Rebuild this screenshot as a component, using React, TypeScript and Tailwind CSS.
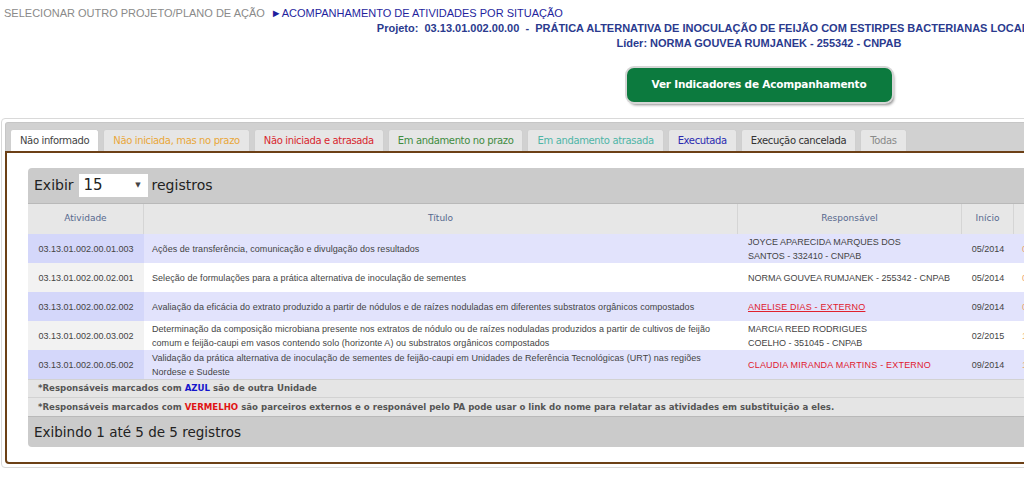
import { Fragment } from "react";

const tabs = [
  { label: "Não informado", color: "text-[#444444]", active: true },
  { label: "Não iniciada, mas no prazo", color: "text-[#e9a63a]" },
  { label: "Não iniciada e atrasada", color: "text-[#d8262e]" },
  { label: "Em andamento no prazo", color: "text-[#3f8b3f]" },
  { label: "Em andamento atrasada", color: "text-[#4fb5a6]" },
  { label: "Executada", color: "text-[#2b2bb0]" },
  { label: "Execução cancelada", color: "text-[#333333]" },
  { label: "Todas", color: "text-[#8a8a8a]" },
];

type Row = {
  id: string;
  title: string[];
  resp: string[];
  external?: "link" | "plain";
  start: string;
  end: string;
};

const rows: Row[] = [
  {
    id: "03.13.01.002.00.01.003",
    title: ["Ações de transferência, comunicação e divulgação dos resultados"],
    resp: ["JOYCE APARECIDA MARQUES DOS", "SANTOS - 332410 - CNPAB"],
    start: "05/2014",
    end: "06/2015",
  },
  {
    id: "03.13.01.002.00.02.001",
    title: ["Seleção de formulações para a prática alternativa de inoculação de sementes"],
    resp: ["NORMA GOUVEA RUMJANEK - 255342 - CNPAB"],
    start: "05/2014",
    end: "04/2015",
  },
  {
    id: "03.13.01.002.00.02.002",
    title: ["Avaliação da eficácia do extrato produzido a partir de nódulos e de raízes noduladas em diferentes substratos orgânicos compostados"],
    resp: ["ANELISE DIAS - EXTERNO"],
    external: "link",
    start: "09/2014",
    end: "08/2015",
  },
  {
    id: "03.13.01.002.00.03.002",
    title: [
      "Determinação da composição microbiana presente nos extratos de nódulo ou de raízes noduladas produzidos a partir de cultivos de feijão",
      "comum e feijão-caupi em vasos contendo solo (horizonte A) ou substratos orgânicos compostados",
    ],
    resp: ["MARCIA REED RODRIGUES", "COELHO - 351045 - CNPAB"],
    start: "02/2015",
    end: "12/2015",
  },
  {
    id: "03.13.01.002.00.05.002",
    title: [
      "Validação da prática alternativa de inoculação de sementes de feijão-caupi em Unidades de Referência Tecnológicas (URT) nas regiões",
      "Nordese e Sudeste",
    ],
    resp: ["CLAUDIA MIRANDA MARTINS - EXTERNO"],
    external: "plain",
    start: "09/2014",
    end: "12/2015",
  },
];

const grid = "grid grid-cols-[116px_594px_224px_52px_1fr]";

export default function App() {
  return (
    <div className="w-[1024px] h-[489px] overflow-hidden bg-white">
      <div className="w-[1518px]">
        <header className="pt-[6px] font-['Liberation_Sans',Arial,sans-serif] text-[11px] leading-[15px]">
          <div className="pl-[4px]">
            <span className="text-[#8a8a8a]">SELECIONAR OUTRO PROJETO/PLANO DE AÇÃO</span>
            <span className="ml-[6px] text-[#1f1f9e]">►ACOMPANHAMENTO DE ATIVIDADES POR SITUAÇÃO</span>
          </div>
          <div className="pl-[20px] text-center font-bold text-[#2a3a8e] whitespace-pre">
            {"Projeto:  03.13.01.002.00.00  -  PRÁTICA ALTERNATIVA DE INOCULAÇÃO DE FEIJÃO COM ESTIRPES BACTERIANAS LOCAIS DA REGIÃO NORDESTE"}
          </div>
          <div className="text-center font-bold text-[#2a3a8e]">Líder: NORMA GOUVEA RUMJANEK - 255342 - CNPAB</div>
        </header>

        <div className="mt-[17px] flex justify-center">
          <button
            type="button"
            className="h-[34px] w-[265px] rounded-[7px] bg-[#0c7a3e] text-white font-['DejaVu_Sans',Verdana,sans-serif] text-[10.5px] font-bold tracking-[-0.2px] shadow-[0_0_0_2px_#d6d6d6,2px_3px_3px_rgba(0,0,0,0.45)]"
          >
            Ver Indicadores de Acompanhamento
          </button>
        </div>

        <section className="mt-[16px] ml-[1px] rounded-[4px] border border-[#d9d9d9] p-[3px]">
          <nav className="flex gap-[4px] rounded-t-[3px] border border-b-0 border-[#c6c6c6] bg-[#d1d1d1] pl-[4px] pt-[6px] font-['DejaVu_Sans',Verdana,sans-serif] text-[10px] tracking-[-0.36px]">
            {tabs.map((t) => (
              <div
                key={t.label}
                className={`flex h-[22px] items-center rounded-t-[3px] border border-b-0 border-[#cfcfcf] px-[9px] ${t.color} ${t.active ? "bg-white" : "bg-[#e6e6e6]"}`}
              >
                {t.label}
              </div>
            ))}
          </nav>

          <div className="rounded-b-[4px] border-2 border-[#6c4016] px-[21px] py-[15px]">
            <div className="overflow-hidden rounded-[4px]">
              <div className="flex h-[35px] items-center bg-[#cbcbcb] pl-[6px] font-['DejaVu_Sans',Verdana,sans-serif] text-[14px] text-[#222]">
                <span>Exibir</span>
                <div className="ml-[5px] flex h-[23px] w-[69px] items-center justify-between bg-white pl-[5px] pr-[7px]">
                  <span className="text-[15px]">15</span>
                  <span className="text-[7px] text-[#444]">▼</span>
                </div>
                <span className="ml-[4px]">registros</span>
              </div>

              <div className={`${grid} h-[31px] border-t border-[#b9b9b9] bg-[#e7e7e7] font-['DejaVu_Sans',Verdana,sans-serif] text-[9px] text-[#56688e]`}>
                {["Atividade", "Título", "Responsável", "Início", ""].map((h, i) => (
                  <div key={i} className="flex items-center justify-center border-r border-[#d5d5d5]">
                    {h}
                  </div>
                ))}
              </div>

              <div className="font-['Liberation_Sans',Arial,sans-serif] text-[9px] leading-[14px] text-[#444]">
                {rows.map((r, i) => {
                  const odd = i % 2 === 0;
                  return (
                    <div key={r.id} className={`${grid} h-[29px] ${odd ? "bg-[#e2e3fc]" : "bg-white"}`}>
                      <div className={`flex items-center justify-center ${odd ? "bg-[#d4d7fa]" : "bg-[#f2f2f2]"}`}>{r.id}</div>
                      <div className="flex flex-col justify-center whitespace-nowrap pl-[8px] tracking-[0.05px]">
                        {r.title.map((l) => (
                          <span key={l}>{l}</span>
                        ))}
                      </div>
                      <div
                        className={`flex flex-col justify-center whitespace-nowrap pl-[10px] ${r.external ? "text-[#e0202e] tracking-[0.2px]" : ""} ${r.external === "link" ? "underline" : ""}`}
                      >
                        {r.resp.map((l) => (
                          <Fragment key={l}>
                            <span>{l}</span>
                          </Fragment>
                        ))}
                      </div>
                      <div className="flex items-center justify-center">{r.start}</div>
                      <div className="flex items-center pl-[8px] text-[#eda36a]">{r.end}</div>
                    </div>
                  );
                })}
              </div>

              <div className="font-['DejaVu_Sans',Verdana,sans-serif] text-[8.6px] font-bold text-[#555]">
                <div className="flex h-[18px] items-center border-t border-[#d2d2d2] bg-[#e5e5e5] pl-[10px]">
                  <span>
                    *Responsáveis marcados com <span className="text-[#1414cc]">AZUL</span> são de outra Unidade
                  </span>
                </div>
                <div className="flex h-[19px] items-center border-t border-[#d2d2d2] bg-[#e5e5e5] pl-[10px]">
                  <span>
                    *Responsáveis marcados com <span className="text-[#e01414]">VERMELHO</span> são parceiros externos e o responável pelo PA pode usar o link do nome para relatar as atividades em substituição a eles.
                  </span>
                </div>
              </div>

              <div className="flex h-[31px] items-center border-t border-[#b9b9b9] bg-[#cbcbcb] pl-[6px] font-['DejaVu_Sans',Verdana,sans-serif] text-[13.5px] text-[#222]">
                Exibindo 1 até 5 de 5 registros
              </div>
            </div>
          </div>
        </section>
      </div>
    </div>
  );
}
